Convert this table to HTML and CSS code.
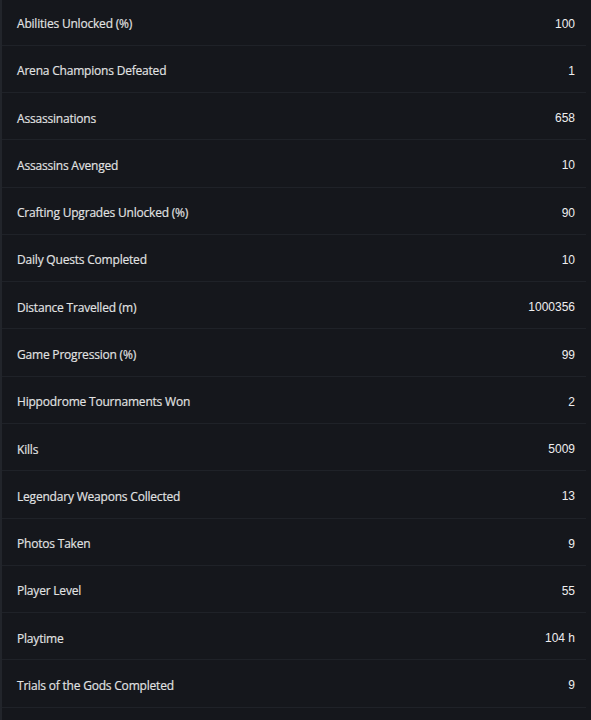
FILE: index.html
```html
<!DOCTYPE html>
<html>
<head>
<meta charset="utf-8">
<link rel="stylesheet" href="styles.css">
</head>
<body>
<div class="panel">
  <ul class="stats">
    <li class="row"><span class="label">Abilities Unlocked (%)</span><span class="value">100</span></li>
    <li class="row"><span class="label">Arena Champions Defeated</span><span class="value">1</span></li>
    <li class="row"><span class="label">Assassinations</span><span class="value">658</span></li>
    <li class="row"><span class="label">Assassins Avenged</span><span class="value">10</span></li>
    <li class="row"><span class="label">Crafting Upgrades Unlocked (%)</span><span class="value">90</span></li>
    <li class="row"><span class="label">Daily Quests Completed</span><span class="value">10</span></li>
    <li class="row"><span class="label">Distance Travelled (m)</span><span class="value">1000356</span></li>
    <li class="row"><span class="label">Game Progression (%)</span><span class="value">99</span></li>
    <li class="row"><span class="label">Hippodrome Tournaments Won</span><span class="value">2</span></li>
    <li class="row"><span class="label">Kills</span><span class="value">5009</span></li>
    <li class="row"><span class="label">Legendary Weapons Collected</span><span class="value">13</span></li>
    <li class="row"><span class="label">Photos Taken</span><span class="value">9</span></li>
    <li class="row"><span class="label">Player Level</span><span class="value">55</span></li>
    <li class="row"><span class="label">Playtime</span><span class="value">104 h</span></li>
    <li class="row"><span class="label">Trials of the Gods Completed</span><span class="value">9</span></li>
  </ul>
</div>
</body>
</html>
```

FILE: styles.css
```css
html, body {
  margin: 0;
  padding: 0;
  background: #15171c;
  height: 100%;
}
.panel {
  height: 100%;
  border-left: 2px solid #22252b;
  background: #15171c;
  overflow: hidden;
}
.stats {
  list-style: none;
  margin: -1.6px 0 0 0;
  padding: 0 5px 0 0;
}
.row {
  display: flex;
  align-items: center;
  justify-content: space-between;
  height: 46.29px;
  border-bottom: 1px solid #1f2228;
  padding: 0 11px 0 15px;
}
.label {
  font-family: "Open Sans", sans-serif;
  font-size: 12px;
  letter-spacing: -0.2px;
  color: #e2e3e4;
  padding-top: 4px;
  -webkit-text-stroke: 0.15px #e2e3e4;
}
.value {
  font-family: "Liberation Sans", Arial, sans-serif;
  font-size: 12px;
  color: #eeeeef;
  padding-top: 4px;
}
```
